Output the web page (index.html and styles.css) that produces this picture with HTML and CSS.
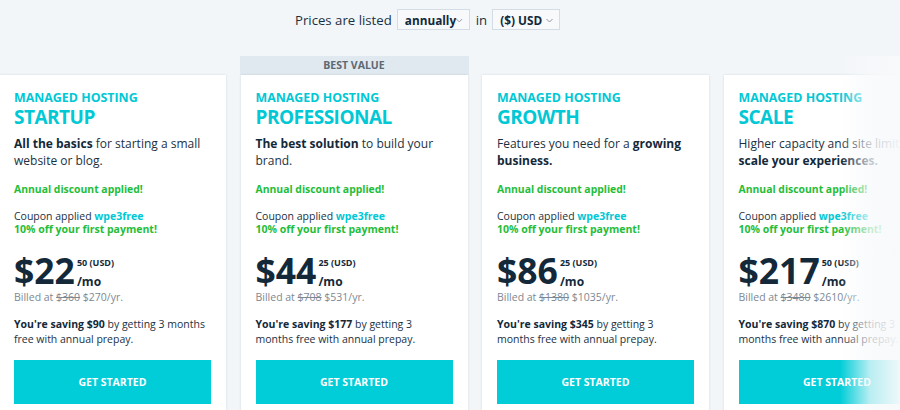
FILE: index.html
```html
<!DOCTYPE html>
<html lang="en">
<head>
<meta charset="utf-8">
<title>Pricing</title>
<link rel="stylesheet" href="styles.css">
</head>
<body>
<div class="page">
  <div class="listing">
    <span class="listing-label">Prices are listed</span>
    <span class="select select-period">annually
      <svg class="chev" width="7" height="5" viewBox="0 0 7 5"><path d="M0.5 1 L3.5 4 L6.5 1" fill="none" stroke="#8a96a2" stroke-width="1"/></svg>
    </span>
    <span class="listing-label in">in</span>
    <span class="select select-cur">($) USD
      <svg class="chev" width="7" height="5" viewBox="0 0 7 5"><path d="M0.5 1 L3.5 4 L6.5 1" fill="none" stroke="#8a96a2" stroke-width="1"/></svg>
    </span>
  </div>

  <div class="plans">
    <div class="col">
      <div class="ribbon ribbon-empty"></div>
      <div class="card">
        <div class="eyebrow">Managed Hosting</div>
        <div class="name">Startup</div>
        <p class="desc"><b>All the basics</b> for starting a small website or blog.</p>
        <p class="discount">Annual discount applied!</p>
        <p class="coupon">Coupon applied <span class="code">wpe3free</span><br><span class="off">10% off your first payment!</span></p>
        <div class="price">
          <span class="amount">$22</span>
          <span class="side"><span class="cents">50 (USD)</span><span class="mo">/mo</span></span>
        </div>
        <p class="billed">Billed at <s>$360</s> $270/yr.</p>
        <p class="saving"><b>You're saving $90</b> by getting 3 months free with annual prepay.</p>
        <a class="cta" href="#">Get Started</a>
      </div>
    </div>

    <div class="col">
      <div class="ribbon">Best Value</div>
      <div class="card">
        <div class="eyebrow">Managed Hosting</div>
        <div class="name">Professional</div>
        <p class="desc"><b>The best solution</b> to build your brand.</p>
        <p class="discount">Annual discount applied!</p>
        <p class="coupon">Coupon applied <span class="code">wpe3free</span><br><span class="off">10% off your first payment!</span></p>
        <div class="price">
          <span class="amount">$44</span>
          <span class="side"><span class="cents">25 (USD)</span><span class="mo">/mo</span></span>
        </div>
        <p class="billed">Billed at <s>$708</s> $531/yr.</p>
        <p class="saving"><b>You're saving $177</b> by getting 3 months free with annual prepay.</p>
        <a class="cta" href="#">Get Started</a>
      </div>
    </div>

    <div class="col">
      <div class="ribbon ribbon-empty"></div>
      <div class="card">
        <div class="eyebrow">Managed Hosting</div>
        <div class="name">Growth</div>
        <p class="desc">Features you need for a <b>growing business.</b></p>
        <p class="discount">Annual discount applied!</p>
        <p class="coupon">Coupon applied <span class="code">wpe3free</span><br><span class="off">10% off your first payment!</span></p>
        <div class="price">
          <span class="amount">$86</span>
          <span class="side"><span class="cents">25 (USD)</span><span class="mo">/mo</span></span>
        </div>
        <p class="billed">Billed at <s>$1380</s> $1035/yr.</p>
        <p class="saving"><b>You're saving $345</b> by getting 3 months free with annual prepay.</p>
        <a class="cta" href="#">Get Started</a>
      </div>
    </div>

    <div class="col">
      <div class="ribbon ribbon-empty"></div>
      <div class="card">
        <div class="eyebrow">Managed Hosting</div>
        <div class="name">Scale</div>
        <p class="desc">Higher capacity and site limits to <b>scale your experiences.</b></p>
        <p class="discount">Annual discount applied!</p>
        <p class="coupon">Coupon applied <span class="code">wpe3free</span><br><span class="off">10% off your first payment!</span></p>
        <div class="price">
          <span class="amount">$217</span>
          <span class="side"><span class="cents">50 (USD)</span><span class="mo">/mo</span></span>
        </div>
        <p class="billed">Billed at <s>$3480</s> $2610/yr.</p>
        <p class="saving"><b>You're saving $870</b> by getting 3 months free with annual prepay.</p>
        <a class="cta" href="#">Get Started</a>
      </div>
    </div>
  </div>
  <div class="fade"></div>
</div>
</body>
</html>
```

FILE: styles.css
```css
* { box-sizing: border-box; }
html, body {
  margin: 0;
  padding: 0;
  background: #f3f6f9;
  overflow: hidden;
  height: 410px;
}
body {
  font-family: "Open Sans", "Noto Sans", sans-serif;
  color: #1b3142;
}
.page {
  position: relative;
  width: 900px;
  height: 410px;
  overflow: hidden;
}
.listing {
  display: flex;
  align-items: center;
  gap: 5px;
  height: 38px;
  padding-left: 295px;
  padding-top: 1px;
}
.listing-label {
  font-size: 13.2px;
  color: #1b3142;
  line-height: 20px;
  white-space: nowrap;
}
.listing-label.in { margin-left: 1px; }
.select {
  display: inline-flex;
  align-items: center;
  justify-content: space-between;
  height: 21px;
  border: 1px solid #d4dde6;
  background: #f7f9fb;
  font-size: 11.8px;
  font-weight: 700;
  color: #13293a;
  padding: 0 6px 0 7px;
  white-space: nowrap;
  flex: 0 0 auto;
}
.select-period { width: 73px; }
.select-cur { width: 68px; }
.chev { display: block; margin-top: 1px; }

.plans {
  display: flex;
  gap: 14.5px;
  margin-left: -1px;
  margin-top: 18px;
}
.col {
  flex: 0 0 227px;
  display: flex;
  flex-direction: column;
}
.ribbon {
  height: 19px;
  margin: 0 -1px;
  background: #e0e8f0;
  color: #5d6872;
  font-size: 10.5px;
  font-weight: 700;
  text-transform: uppercase;
  text-align: center;
  line-height: 19px;
}
.ribbon-empty { background: transparent; }
.card {
  background: #ffffff;
  box-shadow: 0 0 2px rgba(40, 60, 80, 0.16);
  padding: 15px 15px 0;
  height: 360px;
}
.eyebrow {
  color: #00c8d5;
  font-size: 12.4px;
  font-weight: 700;
  text-transform: uppercase;
  line-height: 16px;
}
.name {
  color: #00c8d5;
  font-size: 19px;
  font-weight: 700;
  text-transform: uppercase;
  line-height: 22px;
  letter-spacing: -0.5px;
}
p { margin: 0; }
.desc {
  margin-top: 7px;
  font-size: 12px;
  line-height: 17px;
  color: #1b3142;
  height: 34px;
}
.desc b { color: #13293a; }
.discount {
  margin-top: 12px;
  color: #1fbd3a;
  font-size: 10.4px;
  font-weight: 700;
  line-height: 16px;
}
.coupon {
  margin-top: 12.5px;
  font-size: 10.5px;
  line-height: 13px;
  color: #1b3142;
}
.code { color: #00c8d5; font-weight: 700; }
.off { color: #1fbd3a; font-weight: 700; }
.price {
  display: flex;
  align-items: flex-start;
  margin-top: 15.5px;
  height: 38px;
}
.amount {
  font-size: 35.5px;
  font-weight: 700;
  line-height: 38px;
  color: #13293a;
}
.side {
  display: flex;
  flex-direction: column;
  padding-top: 5.5px;
  margin-left: 2px;
}
.cents {
  font-size: 9px;
  font-weight: 700;
  line-height: 11px;
  color: #13293a;
}
.mo {
  margin-top: 6px;
  font-size: 12px;
  font-weight: 700;
  line-height: 15px;
  color: #13293a;
}
.billed {
  font-size: 10.5px;
  line-height: 16px;
  color: #7d8892;
}
.saving {
  margin-top: 12px;
  font-size: 10.5px;
  line-height: 14.5px;
  color: #1b3142;
  height: 29px;
  padding-right: 3px;
}
.saving b { color: #13293a; }
.cta {
  display: block;
  margin-top: 14px;
  height: 44px;
  line-height: 44px;
  background: #00cdd8;
  color: #ffffff;
  text-decoration: none;
  text-align: center;
  font-size: 10.5px;
  font-weight: 700;
  text-transform: uppercase;
}
.fade {
  position: absolute;
  top: 56px;
  right: 0;
  bottom: 0;
  width: 60px;
  background: linear-gradient(to right, rgba(247, 249, 251, 0), rgba(247, 249, 251, 0.75) 50%, rgba(247, 249, 251, 0.97));
  pointer-events: none;
}
```
